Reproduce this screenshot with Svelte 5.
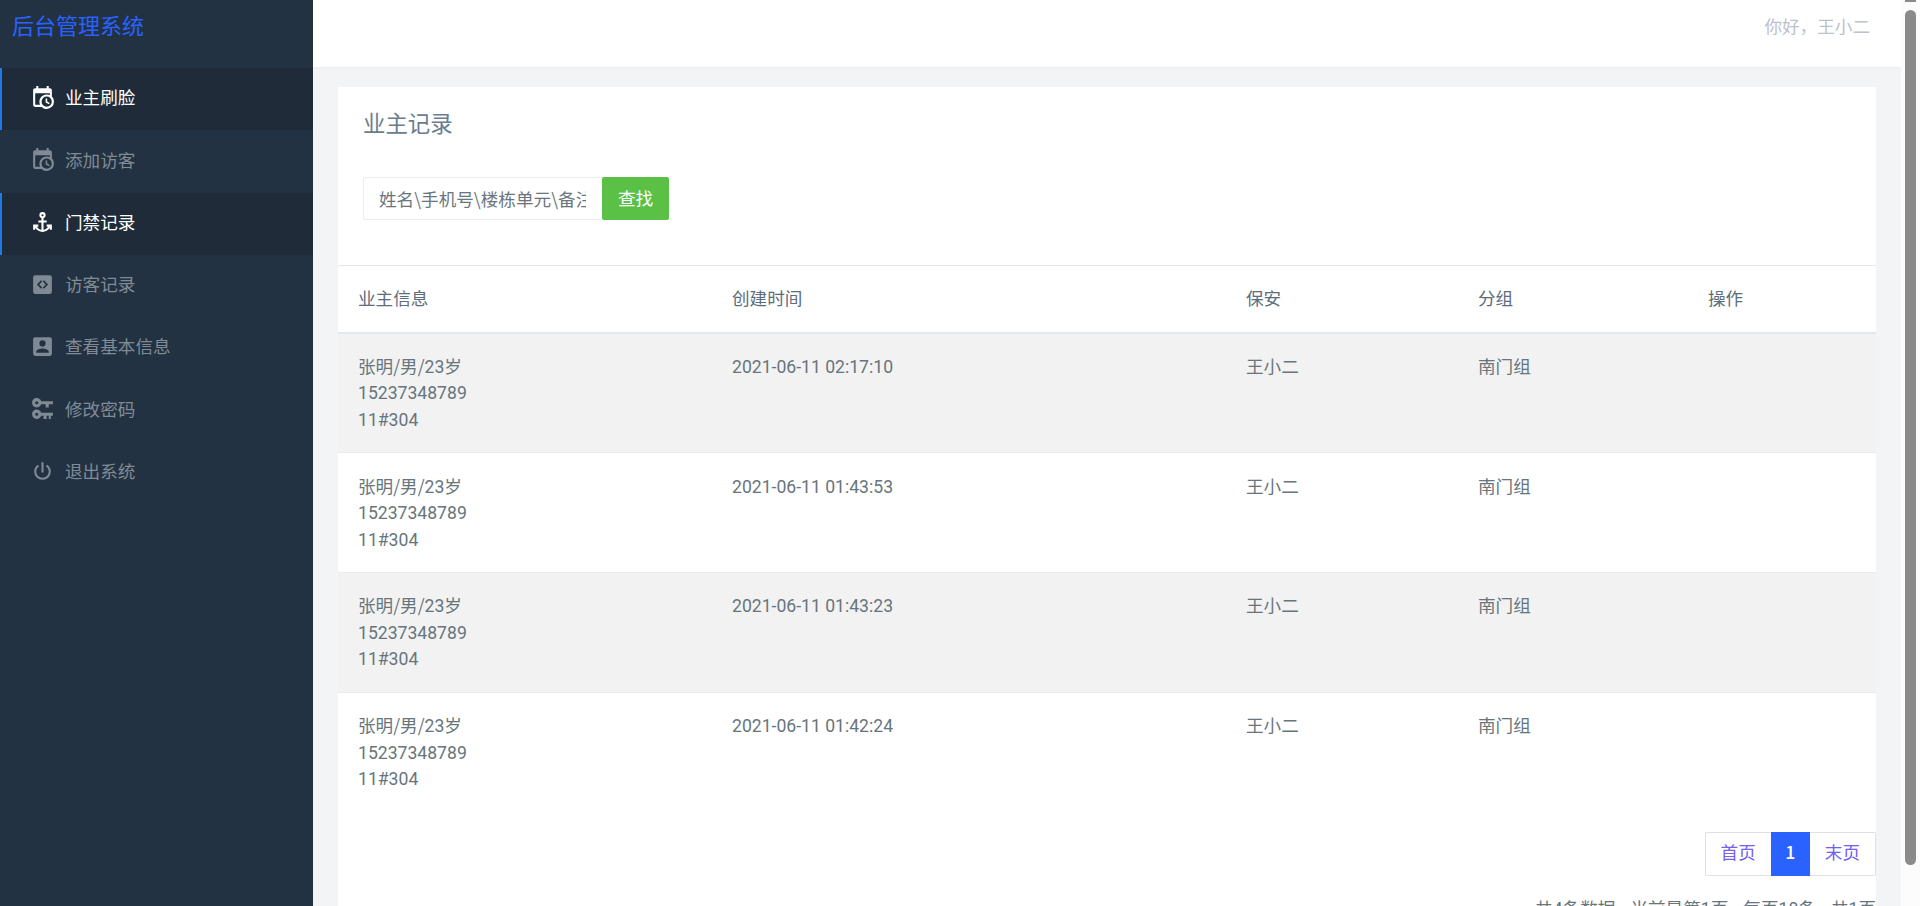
<script>
  const icons = {
    cal: "M15,13H16.5V15.82L18.94,17.23L18.19,18.53L15,16.69V13M19,8H5V19H9.67C9.24,18.09 9,17.07 9,16A7,7 0 0,1 16,9C17.07,9 18.09,9.24 19,9.67V8M5,21C3.89,21 3,20.1 3,19V5C3,3.89 3.89,3 5,3H6V1H8V3H16V1H18V3H19A2,2 0 0,1 21,5V11.1C22.24,12.36 23,14.09 23,16A7,7 0 0,1 16,23C14.09,23 12.36,22.24 11.1,21H5M16,11.13A4.87,4.87 0 0,0 11.13,16A4.87,4.87 0 0,0 16,20.87A4.87,4.87 0 0,0 20.87,16A4.87,4.87 0 0,0 16,11.13Z",
    anchor: "M12,2A3,3 0 0,0 9,5C9,6.27 9.8,7.4 11,7.83V10H8V12H11V18.92C9.16,18.63 7.53,17.57 6.53,16H8V14H3V19H5V17.3C6.58,19.61 9.2,21 12,21C14.8,21 17.42,19.61 19,17.31V19H21V14H16V16H17.46C16.46,17.56 14.83,18.63 13,18.92V12H16V10H13V7.82C14.2,7.4 15,6.27 15,5A3,3 0 0,0 12,2M12,4A1,1 0 0,1 13,5A1,1 0 0,1 12,6A1,1 0 0,1 11,5A1,1 0 0,1 12,4Z",
    code: "M5,3H19A2,2 0 0,1 21,5V19A2,2 0 0,1 19,21H5A2,2 0 0,1 3,19V5A2,2 0 0,1 5,3ZM10.6,8L6.6,12L10.6,16L11.7,14.9L8.8,12L11.7,9.1ZM13.4,8L12.3,9.1L15.2,12L12.3,14.9L13.4,16L17.4,12Z",
    account: "M6,17C6,15 10,13.9 12,13.9C14,13.9 18,15 18,17V18H6M15,9A3,3 0 0,1 12,12A3,3 0 0,1 9,9A3,3 0 0,1 12,6A3,3 0 0,1 15,9M3,5V19A2,2 0 0,0 5,21H19A2,2 0 0,0 21,19V5A2,2 0 0,0 19,3H5C3.89,3 3,3.9 3,5Z",
    key: "M6.5,2C8.46,2 10.13,3.25 10.74,5H22V8H18V11H15V8H10.74C10.13,9.75 8.46,11 6.5,11C4,11 2,9 2,6.5C2,4 4,2 6.5,2M6.5,5A1.5,1.5 0 0,0 5,6.5A1.5,1.5 0 0,0 6.5,8A1.5,1.5 0 0,0 8,6.5A1.5,1.5 0 0,0 6.5,5M6.5,13C8.46,13 10.13,14.25 10.74,16H22V19H20V22H18V19H16V22H13V19H10.74C10.13,20.75 8.46,22 6.5,22C4,22 2,20 2,17.5C2,15 4,13 6.5,13M6.5,16A1.5,1.5 0 0,0 5,17.5A1.5,1.5 0 0,0 6.5,19A1.5,1.5 0 0,0 8,17.5A1.5,1.5 0 0,0 6.5,16Z",
    power: "M16.56,5.44L15.11,6.89C16.84,7.94 18,9.83 18,12A6,6 0 0,1 12,18A6,6 0 0,1 6,12C6,9.83 7.16,7.94 8.88,6.88L7.44,5.44C5.36,6.88 4,9.28 4,12A8,8 0 0,0 12,20A8,8 0 0,0 20,12C20,9.28 18.64,6.88 16.56,5.44M13,3H11V13H13"
  };
  const menu = [
    { label: "业主刷脸", icon: "cal", active: true },
    { label: "添加访客", icon: "cal" },
    { label: "门禁记录", icon: "anchor", active: true },
    { label: "访客记录", icon: "code" },
    { label: "查看基本信息", icon: "account" },
    { label: "修改密码", icon: "key" },
    { label: "退出系统", icon: "power" }
  ];
  const rows = ["02:17:10", "01:43:53", "01:43:23", "01:42:24"];
</script>

<div class="layout">
  <aside class="sidebar">
    <div class="logo">后台管理系统</div>
    <nav>
      {#each menu as m}
        <a class="item" class:active={m.active} href="#top">
          <svg viewBox="0 0 24 24" width="25" height="25"><path fill="currentColor" d={icons[m.icon]} /></svg>
          <span>{m.label}</span>
        </a>
      {/each}
    </nav>
  </aside>
  <div class="main">
    <header class="topbar">你好&#xFF0C;王小二</header>
    <div class="content">
      <section class="card">
        <div class="card-head">
          <h4>业主记录</h4>
          <div class="search">
            <input placeholder="姓名\手机号\楼栋单元\备注" />
            <button>查找</button>
          </div>
        </div>
        <table>
          <colgroup>
            <col class="c1" /><col class="c2" /><col class="c3" /><col class="c4" /><col />
          </colgroup>
          <thead>
            <tr><th>业主信息</th><th>创建时间</th><th>保安</th><th>分组</th><th>操作</th></tr>
          </thead>
          <tbody>
            {#each rows as t}
              <tr>
                <td>张明/男/<span class="num">23</span>岁<br /><span class="num">15237348789</span><br /><span class="num">11#304</span></td>
                <td><span class="num">2021-06-11 {t}</span></td>
                <td>王小二</td>
                <td>南门组</td>
                <td></td>
              </tr>
            {/each}
          </tbody>
        </table>
        <div class="pager">
          <a href="#top">首页</a><a class="cur" href="#top">1</a><a href="#top">末页</a>
        </div>
        <div class="summary">
          <span>共<span class="num">4</span>条数据</span>
          <span>当前是第<span class="num">1</span>页</span>
          <span>每页<span class="num">10</span>条</span>
          <span>共<span class="num">1</span>页</span>
        </div>
      </section>
    </div>
  </div>
</div>
<div class="scrollbar"><i class="nub"></i><i class="thumb"></i></div>

<style>
  :global(html) { background: #f2f4f6; }
  :global(body) {
    margin: 0;
    font-family: "Noto Sans CJK SC", sans-serif;
    font-size: 17.6px;
    line-height: 26.4px;
    color: #67757c;
  }
  .scrollbar {
    position: fixed; top: 0; right: 0; bottom: 0; width: 19px; background: #fcfcfc;
    display: flex; flex-direction: column; align-items: center;
  }
  .nub { display: block; width: 11px; height: 2px; background: #8a8a8a; margin-bottom: 8px; }
  .thumb { display: block; width: 11px; height: 855px; background: #8a8a8a; border-radius: 6px; }
  .layout { display: flex; min-height: 939px; margin-right: 19px; }
  .sidebar { width: 313px; flex: none; background: #233242; }
  .logo { height: 68px; box-sizing: border-box; padding: 10px 12px 0; font-size: 22px; color: #2962ff; line-height: 28px; }
  .item {
    display: flex; align-items: center; gap: 10px;
    height: 62.25px; box-sizing: border-box; padding: 0 0 3px 30px;
    color: #808b95; text-decoration: none; font-size: 17.6px;
  }
  .item svg { color: #7f8a94; flex: none; }
  .item.active { background: #1f2b38; color: #fff; border-left: 2px solid #1e7be6; padding-left: 28px; }
  .item.active svg { color: #fff; }
  .main { flex: 1; min-width: 0; display: flex; flex-direction: column; background: #f2f4f6; }
  .topbar {
    height: 67px; box-sizing: border-box; background: #fff; text-align: right;
    padding: 13px 31px 0 0; color: #bcc1cc; box-shadow: 0 1px 2px rgba(0,0,0,.04);
  }
  .content { padding: 20px 25px 0; flex: 1; }
  .card { background: #fff; }
  .card-head { height: 178px; box-sizing: border-box; padding: 17px 25px 0; }
  h4 { margin: 0; font-weight: 400; font-size: 22.4px; line-height: 36px; color: #687d8f; }
  .search { display: flex; margin-top: 37px; }
  input {
    width: 239px; height: 43px; box-sizing: border-box; padding: 0 16px 0 15px;
    border: 1px solid #e9ecef; border-right: 0; border-radius: 2px 0 0 2px;
    font: inherit; color: #67757c; outline: none; text-overflow: clip;
  }
  input::placeholder { color: #6c757d; opacity: 1; }
  button {
    width: 67px; height: 43px; border: 0; border-radius: 2px; padding: 0;
    background: #5ac146; color: #fff; font: inherit;
  }
  table { width: 100%; table-layout: fixed; border-collapse: collapse; }
  .c1 { width: 374px; } .c2 { width: 514px; } .c3 { width: 232px; } .c4 { width: 230px; }
  th {
    height: 67px; box-sizing: border-box; padding: 0 20px 2px; text-align: left; font-weight: 400; color: #5d6d7c;
    border-top: 1px solid #e3e6ea; border-bottom: 2px solid #e3e6ea;
  }
  td { padding: 19.4px 20px 20.2px; vertical-align: top; border-top: 1px solid #e9ecef; line-height: 26.4px; }
  tbody tr:first-child td { border-top: 0; }
  tbody tr:nth-child(odd) td { background: #f2f2f2; }
  .num { font-family: Roboto, sans-serif; line-height: 1; }
  .pager { display: flex; justify-content: flex-end; margin-top: 20px; }
  .pager a {
    height: 44px; box-sizing: border-box; padding: 6px 15px 0; color: #7460ee; text-decoration: none;
    border: 1px solid #dee2e6; border-left: 0; border-right: 0;
  }
  .pager a:first-child { border-left: 1px solid #dee2e6; border-radius: 2px 0 0 2px; }
  .pager a:last-child { border-right: 1px solid #dee2e6; border-radius: 0 2px 2px 0; }
  .pager .cur { background: #2962ff; border-color: #2962ff; color: #fff; width: 39px; text-align: center; padding: 6px 0 0; font-weight: 500; }
  .summary { display: flex; justify-content: flex-end; gap: 15px; margin-top: 19px; padding-bottom: 18px; line-height: 26px; }
</style>
